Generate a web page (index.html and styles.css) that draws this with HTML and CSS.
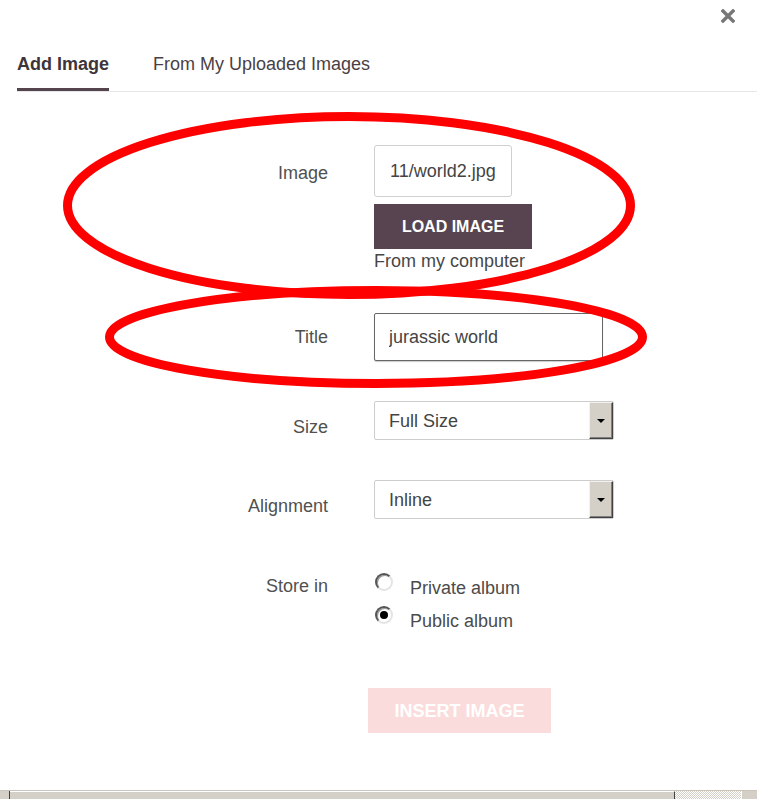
FILE: index.html
```html
<!DOCTYPE html>
<html lang="en">
<head>
    <meta charset="UTF-8">
    <meta name="viewport" content="width=device-width, initial-scale=1.0">
    <title>Add Image</title>
    <link rel="stylesheet" href="styles.css">
</head>
<body>
    <div class="dialog">
        <div class="dialog-top">
            <button class="close" type="button" aria-label="Close">
                <svg width="14" height="14" viewBox="0 0 14 14">
                    <path d="M2 2 L12 12 M12 2 L2 12" stroke="#777" stroke-width="3.4" stroke-linecap="square"/>
                </svg>
            </button>
        </div>

        <nav class="tabs">
            <a class="tab active">Add Image</a>
            <a class="tab">From My Uploaded Images</a>
        </nav>

        <form class="image-form">
            <!-- image source -->
            <div class="row row-image">
                <label class="row-label" for="imageFile">Image</label>
                <div class="row-field">
                    <input class="text-input file-name" id="imageFile" type="text" value="11/world2.jpg" readonly>
                    <button class="btn-load" type="button">LOAD IMAGE</button>
                    <div class="hint">From my computer</div>
                </div>
            </div>

            <div class="row row-title">
                <label class="row-label" for="imageTitle">Title</label>
                <div class="row-field">
                    <input class="text-input title-input" id="imageTitle" type="text" value="jurassic world">
                </div>
            </div>

            <div class="row row-select">
                <label class="row-label">Size</label>
                <div class="row-field">
                    <div class="select">
                        <span class="select-value">Full Size</span>
                        <span class="select-arrow"></span>
                    </div>
                </div>
            </div>

            <div class="row row-select">
                <label class="row-label">Alignment</label>
                <div class="row-field">
                    <div class="select">
                        <span class="select-value">Inline</span>
                        <span class="select-arrow"></span>
                    </div>
                </div>
            </div>

            <!-- album choice -->
            <div class="row row-store">
                <label class="row-label">Store in</label>
                <div class="row-field">
                    <div class="radio-item">
                        <span class="radio"></span>
                        <span class="radio-text">Private album</span>
                    </div>
                    <div class="radio-item">
                        <span class="radio checked"></span>
                        <span class="radio-text">Public album</span>
                    </div>
                </div>
            </div>

            <div class="row row-submit">
                <span></span>
                <div class="row-field">
                    <button class="btn-insert" type="button">INSERT IMAGE</button>
                </div>
            </div>
        </form>

        <div class="hscroll">
            <span class="hs-start"></span>
            <span class="hs-thumb"></span>
            <span class="hs-track"></span>
            <span class="hs-btn"></span>
        </div>

        <!-- hand-drawn highlight marks over the form -->
        <svg class="marks" width="757" height="799" viewBox="0 0 757 799">
            <ellipse cx="349" cy="205.5" rx="281.5" ry="89" fill="none" stroke="#ff0000" stroke-width="9"/>
            <ellipse cx="376" cy="337" rx="266.5" ry="46.5" fill="none" stroke="#ff0000" stroke-width="9"/>
        </svg>
    </div>
</body>
</html>
```

FILE: styles.css
```css
html, body {
    margin: 0;
    overflow: hidden;
    background: #fff;
}
body {
    font-family: "Liberation Sans", Arial, sans-serif;
    font-size: 18px;
    color: #4b4b4b;
}
.dialog {
    position: relative;
    width: 757px;
    height: 799px;
}
.dialog-top {
    height: 36px;
    display: flex;
    justify-content: flex-end;
}
.close {
    border: none;
    background: none;
    margin: 0;
    padding: 9px 22px 0 0;
    height: 36px;
    align-self: flex-start;
    display: flex;
    align-items: flex-start;
}

/* tabs */
.tabs {
    display: flex;
    gap: 44px;
    margin-left: 17px;
    border-bottom: 1px solid #e6e6e6;
}
.tab {
    padding: 17px 0 13px;
    line-height: 22px;
    border-bottom: 3px solid transparent;
    color: #4a3f46;
}
.tab.active {
    font-weight: bold;
    color: #3d3539;
    border-bottom-color: #54444e;
}

/* form rows */
.image-form {
    padding-top: 53px;
}
.row {
    display: grid;
    grid-template-columns: 328px 1fr;
    column-gap: 46px;
    align-items: start;
}
.row-label {
    text-align: right;
    line-height: 22px;
    color: #505050;
}
.row-field {
    display: flex;
    flex-direction: column;
    align-items: flex-start;
}
.text-input {
    box-sizing: border-box;
    font-family: inherit;
    font-size: 18px;
    color: #444;
    margin: 0;
    outline: none;
    background: #fff;
}

.row-image .row-label {
    padding-top: 17px;
}
.file-name {
    width: 138px;
    height: 52px;
    border: 1px solid #d0d0d0;
    border-radius: 3px;
    padding: 0 0 0 15px;
}
.btn-load {
    margin-top: 7px;
    width: 158px;
    height: 45px;
    border: none;
    background: #574450;
    color: #fff;
    font-family: inherit;
    font-weight: bold;
    font-size: 16px;
}
.hint {
    margin-top: 1px;
    line-height: 22px;
    color: #474747;
}

.row-title {
    margin-top: 41px;
}
.row-title .row-label {
    padding-top: 13px;
}
.title-input {
    width: 229px;
    height: 48px;
    border: 1px solid #666;
    border-radius: 2px;
    padding: 1px 0 0 14px;
    box-shadow: 0 1px 1px rgba(0, 0, 0, 0.2);
}

/* old style drop downs */
.row-select {
    margin-top: 40px;
}
.row-select .row-label {
    padding-top: 15px;
}
.select {
    box-sizing: border-box;
    width: 240px;
    height: 39px;
    border: 1px solid #cdcdcd;
    border-radius: 2px;
    display: flex;
    background: #fff;
}
.select-value {
    flex: 1;
    padding: 1px 0 0 14px;
    line-height: 37px;
    color: #444;
}
.select-arrow {
    box-sizing: border-box;
    width: 24px;
    background: #d4d0c8;
    border: 1px solid;
    border-color: #f4f2ee #404040 #404040 #f4f2ee;
    box-shadow: inset -1px -1px #808080;
    display: flex;
    align-items: center;
    justify-content: center;
}
.select-arrow::after {
    content: "";
    border-left: 4px solid transparent;
    border-right: 4px solid transparent;
    border-top: 4px solid #000;
    margin-top: 1px;
}

/* radios */
.row-store {
    margin-top: 55px;
}
.row-store .row-label {
    padding-top: 1px;
}
.radio-item {
    height: 33px;
    display: flex;
    align-items: flex-start;
}
.radio {
    box-sizing: border-box;
    width: 18px;
    height: 18px;
    margin: -1px 17px 0 1px;
    border-radius: 50%;
    border: 2px solid;
    border-color: #555 #e4e4e4 #e4e4e4 #555;
    background: #fff;
    box-shadow: inset 1px 1px #9a9a9a;
    display: flex;
    align-items: center;
    justify-content: center;
}
.radio.checked::after {
    content: "";
    width: 8px;
    height: 8px;
    border-radius: 50%;
    background: #000;
}
.radio-text {
    margin-top: 3px;
    line-height: 22px;
    color: #4b4b4b;
}

.row-submit {
    margin-top: 48px;
}
.btn-insert {
    margin-left: -6px;
    width: 183px;
    height: 45px;
    border: none;
    background: #fbdcdc;
    color: #fff;
    font-family: inherit;
    font-weight: bold;
    font-size: 18px;
    padding-top: 2px;
}

/* bottom scroll bar */
.hscroll {
    margin-top: 57px;
    height: 17px;
    display: flex;
    border-top: 1px solid #c9c5bd;
    background: #d4d0c8;
}
.hs-start {
    width: 9px;
    border-right: 1px solid #404040;
}
.hs-thumb {
    flex: 1;
    border-top: 1px solid #fff;
    border-right: 1px solid #404040;
}
.hs-track {
    width: 66px;
    background-color: #fff;
    background-image: repeating-conic-gradient(#d4d0c8 0 25%, #fff 0 50%);
    background-size: 2px 2px;
}
.hs-btn {
    width: 15px;
    border-left: 1px solid #fff;
}

.marks {
    position: absolute;
    top: 0;
    left: 0;
    pointer-events: none;
}
```
